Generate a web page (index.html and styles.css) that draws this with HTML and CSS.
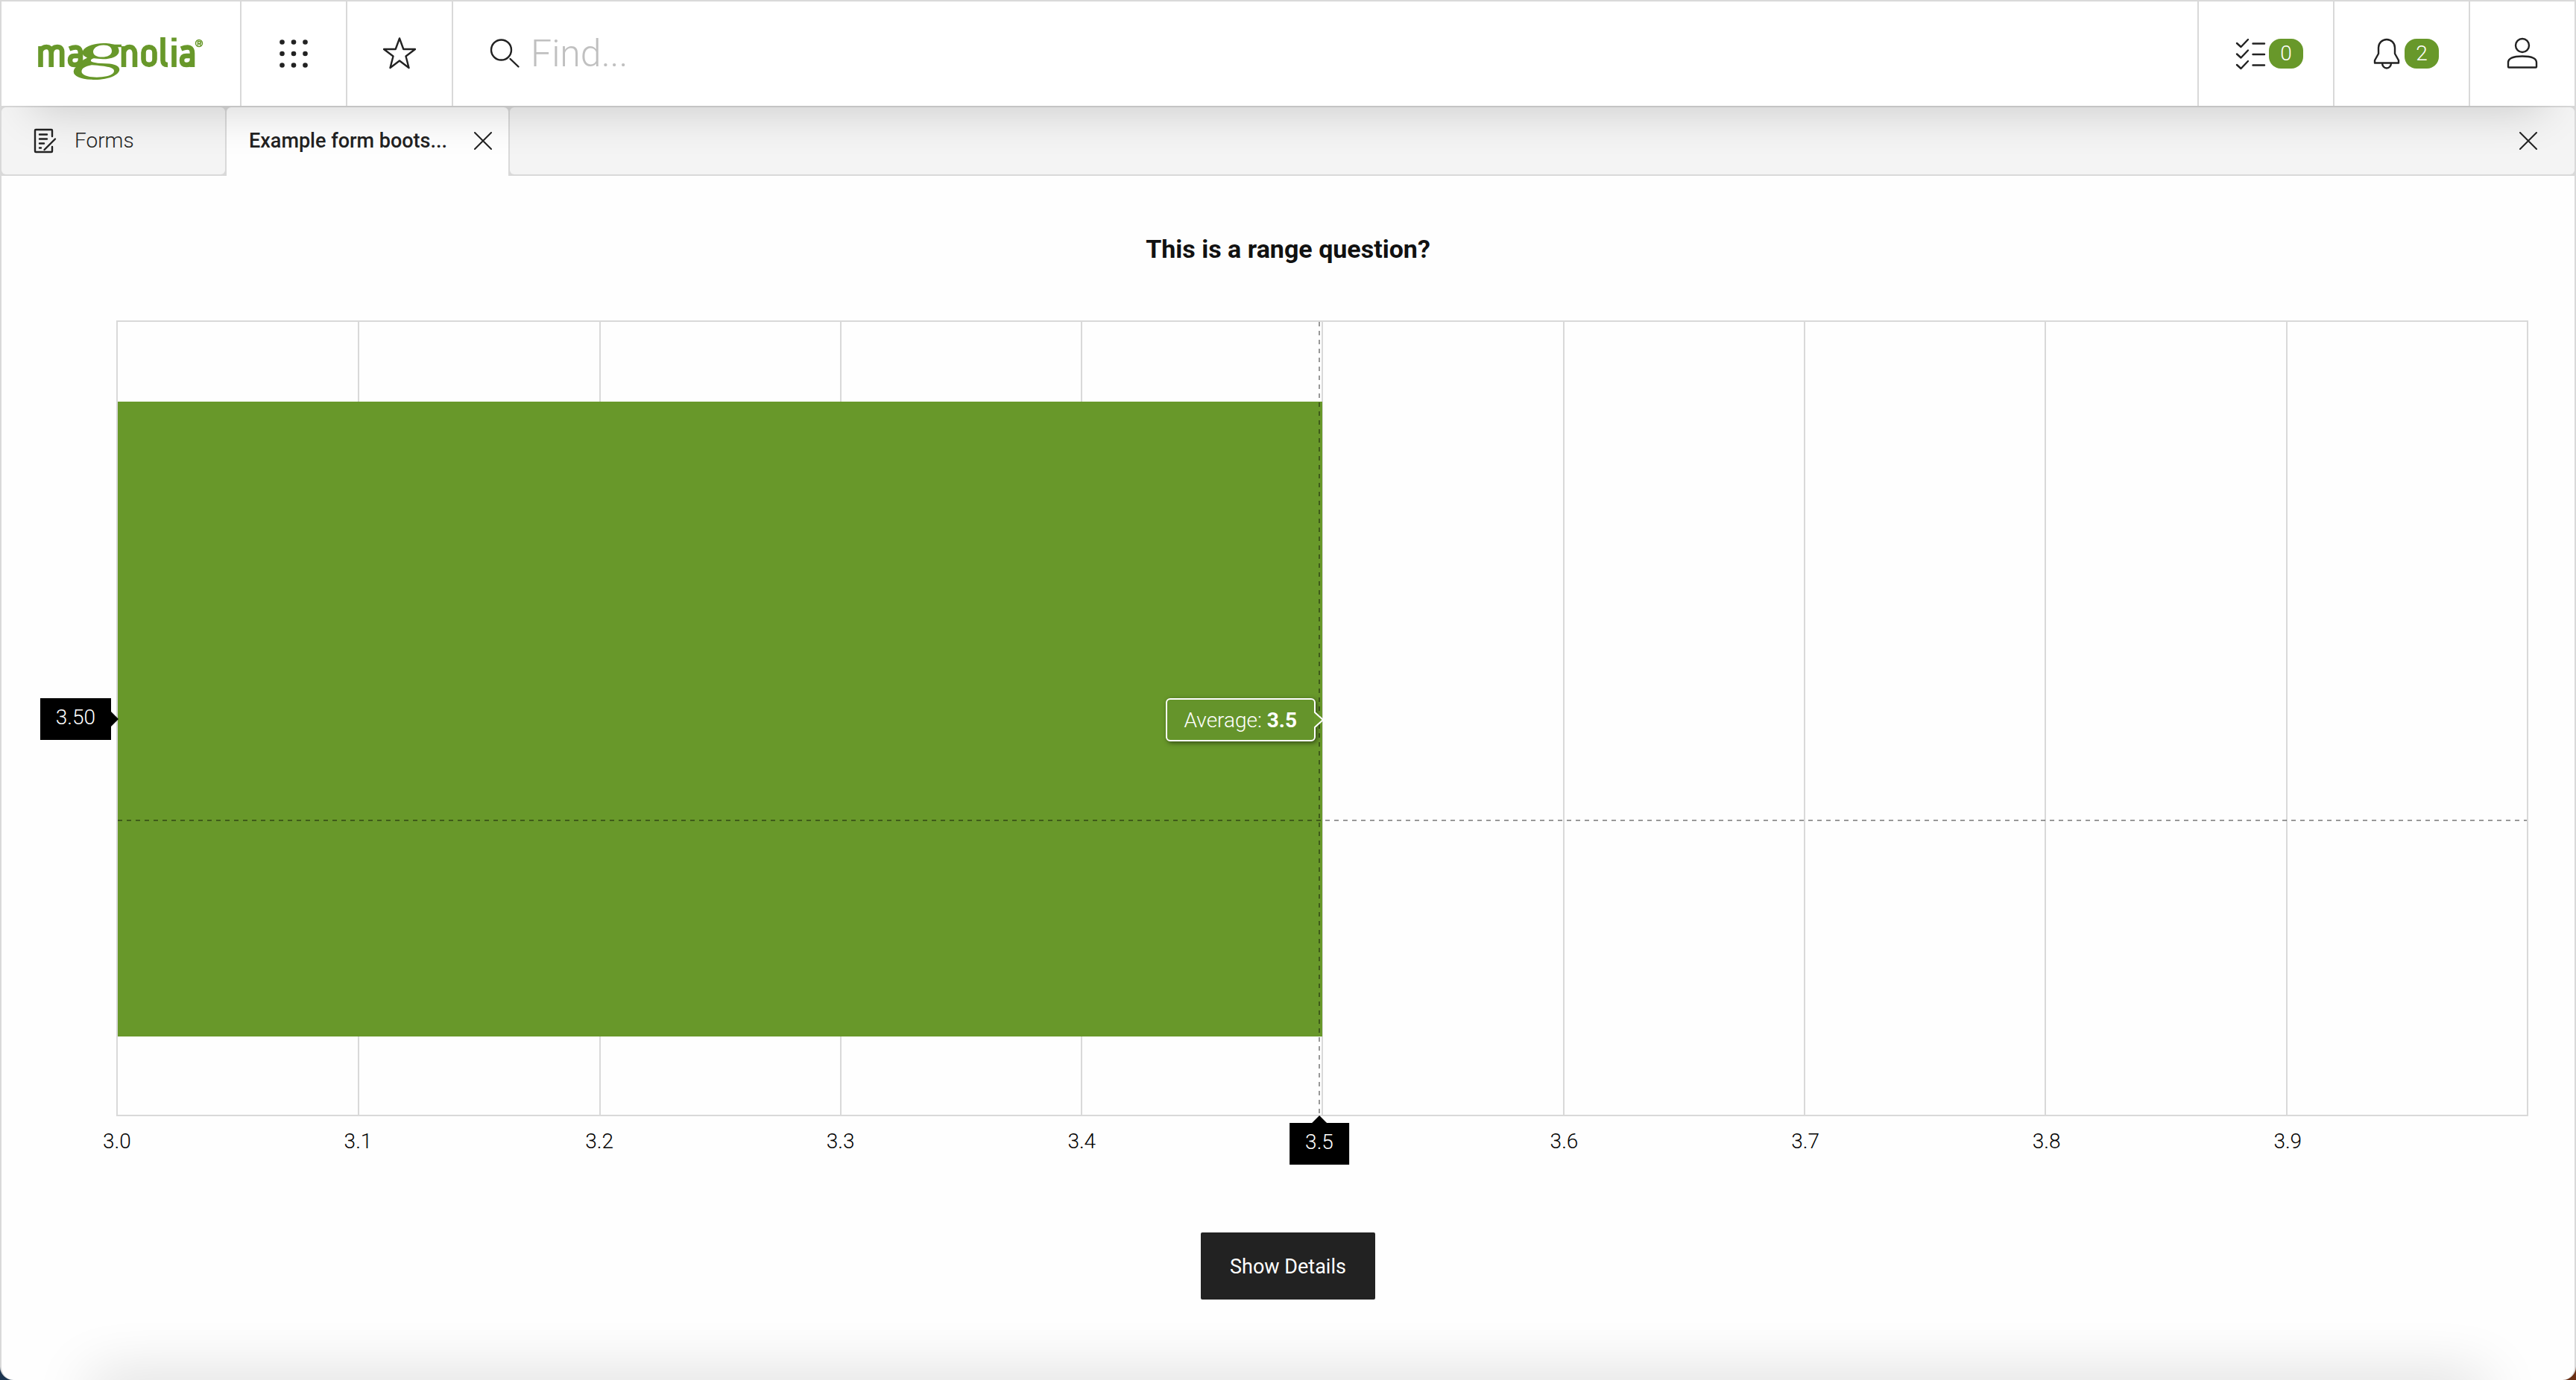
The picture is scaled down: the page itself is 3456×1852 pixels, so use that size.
FILE: index.html
```html
<!DOCTYPE html>
<html lang="en">
<head>
<meta charset="utf-8">
<meta name="viewport" content="width=device-width, initial-scale=1">
<title>Example form bootstrap – Magnolia</title>
<link rel="stylesheet" href="styles.css">
</head>
<body>
<div class="app">
  <header class="topbar">
    <a class="brand" href="#" aria-label="Magnolia home">
      <svg class="brand-logo" viewBox="0 0 222 58" fill="none" stroke="#68982a" aria-hidden="true">
        <g stroke-width="6.6">
          <path d="M3.500 41V13M3.500 20q2-6 8-6t6.200 8v19M17.700 22q1-8 8-8t6.500 8v19"/>
          <path d="M42 16.500q15-6 15 6V41M57 26H49q-6 0-6 6t6 6q8 0 8-7"/>
          <path d="M115 41V13M115 21q2-7 8-7t7 8v19"/>
          <rect x="141.500" y="14.200" width="15" height="23.500" rx="7.200"/>
          <path d="M167.500 1v31q0 6 6.500 6"/>
          <path d="M182.500 12v29M182.500 1.500v5"/>
          <path d="M192 16.500q15-6 15 6V41M207 26h-8q-6 0-6 6t6 6q8 0 8-7"/>
        </g>
        <path fill="#68982a" stroke="none" fill-rule="evenodd" d="M88 10C97 10 101 12 104 12H112V16H107C113 27 102 34 87 34C82 34 78 33 75 33C70 34 69 38 75 39C82 41 89 40 96 41C112 43 112 52 104 58C96 64 82 66 71 65C56 64 46 59 48 51C49 46 54 43 60 42C56 39 59 36 66 32C60 29 58 25 61 20C65 14 76 10 88 10ZM88 13C79 13 74 18 74 23S79 31 86 31S99 28 99 22S95 13 88 13ZM72 43C61 45 57 50 59 55C64 64 95 63 101 55C105 48 98 45 72 43Z" transform="scale(1 .89)"/>
        <circle cx="216" cy="9" r="4.500" stroke-width="1.500"/>
        <path d="M214.500 12V6.500h2q2 0 2 1.500t-2 1.500h-2m2 0 2 2.500" stroke-width="1.500"/>
      </svg>
    </a>
    <button class="tool" type="button" aria-label="Apps">
      <svg class="icon" viewBox="0 0 44 44" fill="#222" aria-hidden="true">
        <circle cx="6.500" cy="6.500" r="3.300"/><circle cx="22" cy="6.500" r="3.300"/><circle cx="37.500" cy="6.500" r="3.300"/>
        <circle cx="6.500" cy="22" r="3.300"/><circle cx="22" cy="22" r="3.300"/><circle cx="37.500" cy="22" r="3.300"/>
        <circle cx="6.500" cy="37.500" r="3.300"/><circle cx="22" cy="37.500" r="3.300"/><circle cx="37.500" cy="37.500" r="3.300"/>
      </svg>
    </button>
    <button class="tool" type="button" aria-label="Favorites">
      <svg class="icon line" viewBox="0 0 44 44" aria-hidden="true"><path d="M22 1.500l5.300 14.500H43L30.500 25.500 34.500 41 22 31.500 9.500 41 13.500 25.500 1 16H16.700Z"/></svg>
    </button>
    <label class="search">
      <svg class="icon line" viewBox="0 0 44 44" aria-hidden="true"><circle cx="16.500" cy="17" r="13.500"/><path d="M28.500 29 39.500 39.500"/></svg>
      <input class="search-input" type="text" placeholder="Find..." aria-label="Find">
    </label>
    <button class="tool counted" type="button" aria-label="Tasks">
      <svg class="icon line" viewBox="0 0 44 44" aria-hidden="true"><path d="M3 8l5.500 5L18 3M3 22.500l5.500 5 9.500-10M3 37l5.500 5L18 32M24.500 8.500H40M24.500 23H40M24.500 37.500H40"/></svg>
      <span class="badge">0</span>
    </button>
    <button class="tool counted" type="button" aria-label="Notifications">
      <svg class="icon line" viewBox="0 0 44 44" aria-hidden="true"><path d="M11 14a11 11 0 0 1 22 0v8l5 9v3.500H6V31l5-9ZM16 34.500a6 7 0 0 0 12 0"/></svg>
      <span class="badge">2</span>
    </button>
    <button class="tool profile" type="button" aria-label="User">
      <svg class="icon line" viewBox="0 0 44 44" aria-hidden="true"><circle cx="22" cy="11" r="9"/><path d="M4 40.500H40q1 0 1-1V34Q41 25.500 22 25.500T3 34v5.500q0 1 1 1Z"/></svg>
    </button>
  </header>

  <nav class="tabs" aria-label="Open apps">
    <a class="tab tab-app" href="#">
      <svg class="tab-icon" viewBox="0 0 32 34" fill="none" stroke="#222" stroke-width="2.400" stroke-linecap="round" stroke-linejoin="round" aria-hidden="true"><path d="M26 11V3q0-1-1-1H4Q3 2 3 3V31q0 1 1 1H25q1 0 1-1V25M9 8.500H19M9 14.500H19M9 20.500h6M9 26.500h2M30 14.500 15.500 29"/></svg>
      <span class="tab-name">Forms</span>
    </a>
    <div class="tab tab-active">
      <a class="tab-title" href="#" aria-current="page">Example form boots...</a>
      <button class="close" type="button" aria-label="Close tab">
        <svg class="close-icon" viewBox="0 0 24 24" aria-hidden="true"><path d="M1 1l22 22M23 1 1 23"/></svg>
      </button>
    </div>
    <div class="tab tab-rest">
      <button class="close" type="button" aria-label="Close app">
        <svg class="close-icon" viewBox="0 0 24 24" aria-hidden="true"><path d="M1 1l22 22M23 1 1 23"/></svg>
      </button>
    </div>
  </nav>

  <main class="content">
    <h1 class="question">This is a range question?</h1>
    <section class="chart" aria-label="Average answer">
      <div class="plot">
        <div class="grid">
          <i class="cell"></i><i class="cell"></i><i class="cell"></i><i class="cell"></i><i class="cell"></i><i class="cell"></i><i class="cell"></i><i class="cell"></i><i class="cell"></i><i class="cell"></i>
        </div>
        <div class="bar" style="width: 50%"></div>
        <div class="cross-h"></div>
        <div class="cross-v"></div>
        <div class="tip tip-y">3.50</div>
        <div class="tip tip-x">3.5</div>
        <div class="tip-value">Average: <b>3.5</b>
          <svg class="tip-arrow" viewBox="0 0 14 22" aria-hidden="true"><path fill="#68982a" d="M0 0h2v1l10 10L2 21v1H0Z"/><path fill="none" stroke="#fff" stroke-width="2" d="M1 0v1l11 10L1 21v1"/></svg>
        </div>
      </div>
      <div class="axis">
        <span class="tick">3.0</span><span class="tick">3.1</span><span class="tick">3.2</span><span class="tick">3.3</span><span class="tick">3.4</span><span class="tick"></span><span class="tick">3.6</span><span class="tick">3.7</span><span class="tick">3.8</span><span class="tick">3.9</span>
      </div>
    </section>
    <button class="details" type="button">Show Details</button>
  </main>
</div>
</body>
</html>
```
FILE: styles.css
```css
* { box-sizing: border-box; }

body {
  margin: 0;
  background: linear-gradient(90deg, #1c3550 50%, #6b2f14 50%);
  color: #222;
  font: 300 28px/32px Roboto, "Liberation Sans", sans-serif;
}

button {
  padding: 0;
  border: 0;
  background: none;
  color: inherit;
  font: inherit;
}

a { color: inherit; text-decoration: none; }

.app {
  position: relative;
  display: flex;
  flex-direction: column;
  min-height: 100vh;
  overflow: hidden;
  border: 2px solid #d9d9d9;
  border-bottom: 0;
  border-radius: 0 0 18px 18px;
  background: #fefefe;
}

/* shade cast from below the window edge */
.app::after {
  content: "";
  position: absolute;
  top: 100%;
  left: 120px;
  right: 120px;
  height: 40px;
  box-shadow: 0 0 80px rgba(0, 0, 0, .2);
}

/* Top bar */
.topbar {
  position: relative;
  z-index: 1;
  display: flex;
  height: 142px;
  border-bottom: 2px solid #d9d9d9;
  background: #fff;
}

.topbar::before {
  content: "";
  position: absolute;
  z-index: -1;
  inset: 40px 40px 0;
  box-shadow: 0 8px 60px rgba(0, 0, 0, .16);
}

.brand,
.tool {
  display: flex;
  align-items: center;
  justify-content: center;
  border-right: 2px solid #d9d9d9;
  background: #fff;
}

.brand { width: 322px; }
.brand-logo { width: 222px; height: 58px; margin-top: 12px; }
.tool { width: 142px; }
.icon { flex: none; width: 44px; height: 44px; }

.line {
  fill: none;
  stroke: #222;
  stroke-width: 2.4;
  stroke-linecap: round;
  stroke-linejoin: round;
}

.search {
  display: flex;
  flex: 1;
  align-items: center;
  padding-left: 48px;
  background: #fff;
}

.search-input {
  flex: 1;
  min-width: 0;
  padding: 0 12px;
  border: 0;
  outline: 0;
  background: none;
  color: #222;
  font: 300 50px/64px Roboto, "Liberation Sans", sans-serif;
}

.search-input::placeholder { color: #c0c0c0; }

.counted {
  gap: 2px;
  width: 182px;
  padding-left: 8px;
  border-right: 0;
  border-left: 2px solid #d9d9d9;
}

.profile { border-right: 0; border-left: 2px solid #d9d9d9; }

.badge {
  width: 46px;
  border-radius: 16px;
  background: #68982a;
  color: #fff;
  line-height: 40px;
  text-align: center;
}

/* Tabs */
.tabs {
  display: flex;
  height: 92px;
  background: #d9d9d9;
}

.tab {
  display: flex;
  align-items: center;
  margin-bottom: 2px;
  background: #f4f4f4;
}

.tab-app { gap: 24px; width: 300px; padding-left: 42px; border-radius: 6px; }
.tab-icon { width: 32px; height: 34px; }

.tab-active {
  justify-content: space-between;
  width: 378px;
  margin: 0 2px;
  padding: 0 22px 2px 30px;
  border-radius: 6px 6px 0 0;
  background: #fefefe;
}

.tab-title { font-size: 27px; font-weight: 500; }
.tab-rest { flex: 1; justify-content: flex-end; padding-right: 50px; border-radius: 6px; }
.close { display: flex; }
.close-icon { width: 24px; height: 24px; fill: none; stroke: #222; stroke-width: 2; stroke-linecap: round; }

/* Chart */
.content {
  display: flex;
  flex-direction: column;
  align-items: center;
  padding: 74px 62px 108px;
}

.question {
  margin: 0;
  color: #111;
  font-size: 34px;
  font-weight: 700;
  line-height: 48px;
}

.chart { align-self: stretch; margin-top: 72px; padding-left: 92px; }

.plot {
  position: relative;
  display: flex;
  align-items: center;
  height: 1068px;
  padding-top: 2px;
  border: 2px solid #d9d9d9;
}

.grid {
  position: absolute;
  inset: 0 0 0 -1px;
  display: grid;
  grid-template-columns: repeat(10, 1fr);
}

.cell + .cell { border-left: 2px solid #d9d9d9; }
.bar { position: relative; height: calc(80% + 2px); background: #68982a; }

.cross-h,
.cross-v { position: absolute; }

.cross-h {
  top: 668px;
  left: 0;
  right: 0;
  height: 2px;
  background: repeating-linear-gradient(90deg, rgba(0, 0, 0, .4) 0 6px, transparent 6px 12px);
}

.cross-v {
  top: 0;
  bottom: 0;
  right: 50%;
  width: 2px;
  margin-right: 3px;
  background: repeating-linear-gradient(rgba(0, 0, 0, .4) 0 6px, transparent 6px 12px);
}

.tip {
  position: absolute;
  padding: 10px 21px 14px;
  background: #000;
  color: #fff;
}

.tip::after {
  content: "";
  position: absolute;
  border: 10px solid transparent;
}

.tip-y { right: 100%; margin-right: 9px; }
.tip-y::after { top: 18px; left: 100%; border-left-color: #000; }
.tip-x { top: 100%; left: 50%; margin: 11px 0 0 -4px; transform: translateX(-50%); }
.tip-x::after { bottom: 100%; left: 50%; margin-left: -10px; border-bottom-color: #000; }

.tip-value {
  position: absolute;
  right: 50%;
  margin: 2px 9px 0 0;
  padding: 12px 23px 10px;
  border: 2px solid #fff;
  border-radius: 6px;
  background: #65942b;
  box-shadow: 2px 2px 6px rgba(0, 0, 0, .5);
  color: #fff;
}

.tip-value b { font-weight: 700; }

.tip-arrow {
  position: absolute;
  top: 16px;
  left: 100%;
  width: 14px;
  height: 22px;
}

.axis { display: grid; grid-template-columns: repeat(10, 1fr); margin-top: 18px; color: #000; }
.tick { height: 32px; }
.tick:not(:empty) { transform: translateX(-18px); }

.details {
  width: 234px;
  margin-top: 106px;
  padding-top: 2px;
  border-radius: 2px;
  background: #222;
  color: #fff;
  font-size: 27px;
  font-weight: 400;
  line-height: 88px;
}
```
